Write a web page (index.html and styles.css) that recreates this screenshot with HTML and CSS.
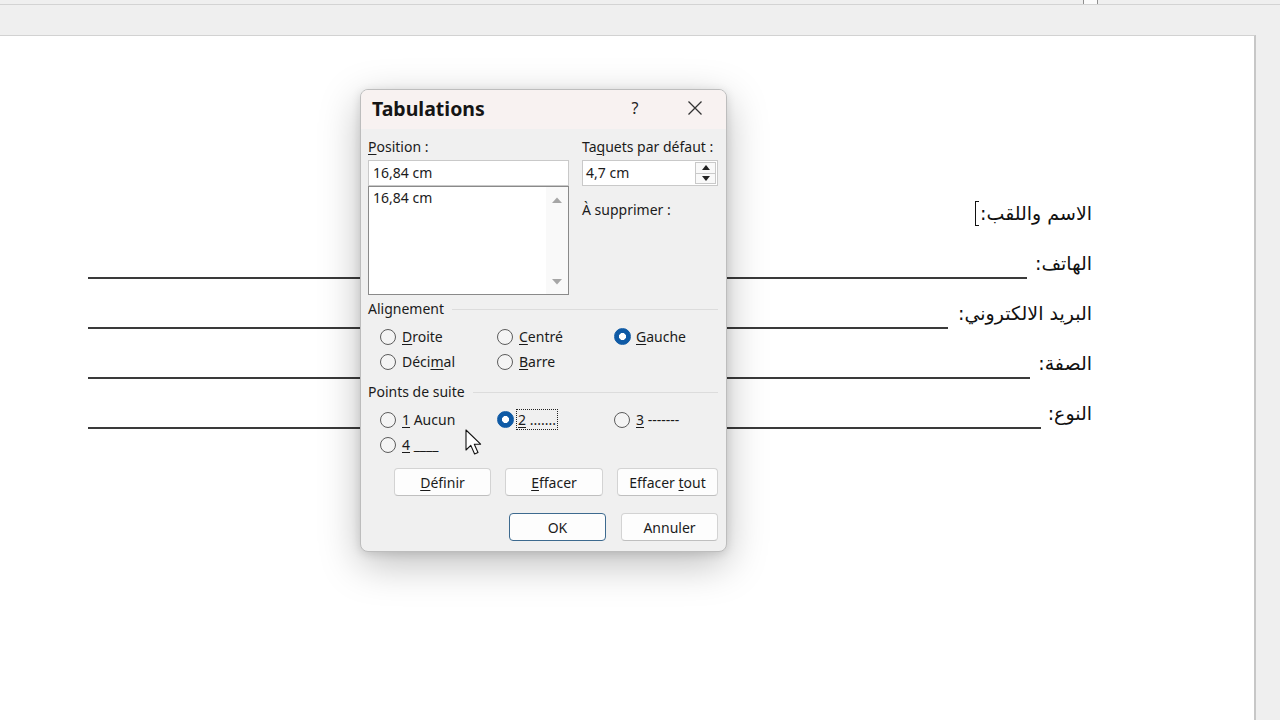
FILE: index.html
```html
<!DOCTYPE html>
<html lang="fr">
<head>
<meta charset="utf-8">
<title>Tabulations</title>
<link rel="stylesheet" href="styles.css">
</head>
<body>
<div class="app">
  <div class="topbar">
    <span class="marker"></span>
    <span class="rule"></span>
  </div>
  <div class="page">
    <div class="form" dir="rtl" lang="ar">
      <div class="frow"><span class="flabel">الاسم واللقب:</span><span class="caret"></span></div>
      <div class="frow"><span class="flabel">الهاتف:</span><span class="fline"></span></div>
      <div class="frow"><span class="flabel">البريد الالكتروني:</span><span class="fline long"></span></div>
      <div class="frow"><span class="flabel">الصفة:</span><span class="fline"></span></div>
      <div class="frow"><span class="flabel">النوع:</span><span class="fline short"></span></div>
    </div>
  </div>
</div>

<div class="dialog">
  <div class="titlebar">
    <span class="title">Tabulations</span>
    <span class="tbtn help">?</span>
    <span class="tbtn close">
      <svg width="16" height="16" viewBox="0 0 16 16"><path d="M1.5 1.5 L14.5 14.5 M14.5 1.5 L1.5 14.5" stroke="#333" stroke-width="1.3" fill="none"/></svg>
    </span>
  </div>
  <div class="dbody">
    <div class="top">
      <div class="colL">
        <div class="lbl"><u>P</u>osition :</div>
        <div class="input">16,84 cm</div>
        <div class="listbox">
          <div class="lb-items">16,84 cm</div>
          <div class="lb-scroll">
            <svg width="12" height="8" viewBox="0 0 12 8"><path d="M1 7 L6 1.5 L11 7 Z" fill="#a6a6a6"/></svg>
            <svg width="12" height="8" viewBox="0 0 12 8"><path d="M1 1 L6 6.5 L11 1 Z" fill="#a6a6a6"/></svg>
          </div>
        </div>
      </div>
      <div class="colR">
        <div class="lbl">Ta<u>q</u>uets par défaut :</div>
        <div class="input spin">
          <span class="spin-val">4,7 cm</span>
          <span class="spin-btns">
            <span class="sb"><svg width="8" height="5" viewBox="0 0 8 5"><path d="M0 5 L4 0 L8 5 Z" fill="#222"/></svg></span>
            <span class="sb"><svg width="8" height="5" viewBox="0 0 8 5"><path d="M0 0 L4 5 L8 0 Z" fill="#222"/></svg></span>
          </span>
        </div>
        <div class="lbl del">À supprimer :</div>
      </div>
    </div>

    <div class="group">Alignement<span class="gline"></span></div>
    <div class="radios">
      <div class="radio"><span class="dot"></span><span><u>D</u>roite</span></div>
      <div class="radio"><span class="dot"></span><span><u>C</u>entré</span></div>
      <div class="radio"><span class="dot on"></span><span><u>G</u>auche</span></div>
      <div class="radio"><span class="dot"></span><span>Déci<u>m</u>al</span></div>
      <div class="radio"><span class="dot"></span><span><u>B</u>arre</span></div>
    </div>

    <div class="group g2">Points de suite<span class="gline"></span></div>
    <div class="radios">
      <div class="radio"><span class="dot"></span><span><u>1</u> Aucun</span></div>
      <div class="radio"><span class="dot on"></span><span class="focus"><u>2</u> .......</span></div>
      <div class="radio"><span class="dot"></span><span><u>3</u> -------</span></div>
      <div class="radio"><span class="dot"></span><span><u>4</u> ____</span></div>
    </div>

    <div class="btnrow">
      <span class="btn w97"><span><u>D</u>éfinir</span></span>
      <span class="btn w98"><span><u>E</u>ffacer</span></span>
      <span class="btn w101"><span>Effacer <u>t</u>out</span></span>
    </div>
    <div class="btnrow ok-row">
      <span class="btn w97 default">OK</span>
      <span class="btn w97">Annuler</span>
    </div>
  </div>
</div>

<svg class="cursor" width="20" height="28" viewBox="0 0 20 28">
  <path d="M1 1 L1 21 L5.8 16.4 L9.6 25 L13 23.5 L9.3 15.2 L15.6 15.2 Z" fill="#fff" stroke="#111" stroke-width="1.1" stroke-linejoin="round"/>
</svg>
</body>
</html>
```

FILE: styles.css
```css
* { box-sizing: border-box; }
html, body { margin: 0; padding: 0; }
body {
  width: 1280px;
  height: 720px;
  overflow: hidden;
  background: #efefef;
  position: relative;
  font-family: "Noto Sans", "DejaVu Sans", sans-serif;
}
.app { display: flex; flex-direction: column; height: 720px; }

.topbar { height: 35px; display: flex; flex-direction: column; }
.marker {
  display: block;
  margin-left: 1083px;
  width: 15px;
  height: 5px;
  border: 1px solid #8f8f8f;
  border-top: none;
  background: #fbfbfb;
}
.rule { display: block; height: 1px; background: #d3d3d3; margin-top: -1px; }

.page {
  width: 1256px;
  flex: 1;
  background: #fff;
  border-top: 1px solid #d2d2d2;
  border-right: 2px solid #c7c7c7;
  padding: 152px 162px 0 88px;
}

.form { font-family: "DejaVu Sans", sans-serif; color: #111; }
.frow { display: flex; align-items: flex-start; height: 50px; }
.flabel { font-size: 19px; line-height: 50px; white-space: nowrap; }
.fline {
  flex: 1;
  margin-top: 39px;
  margin-right: 8px;
  border-top: 2px solid #3a3a3a;
}
.fline.long { margin-right: 10px; }
.fline.short { margin-right: 7px; }
.caret {
  margin-top: 13px;
  margin-right: 1px;
  width: 4px;
  height: 25px;
  border-left: 1.5px solid #111;
  border-top: 1px solid #111;
  border-bottom: 1px solid #111;
}

/* dialog */
.dialog {
  position: absolute;
  left: 360px;
  top: 89px;
  width: 367px;
  height: 463px;
  border: 1px solid #bdbdbd;
  border-radius: 8px;
  background: #f0f0f0;
  box-shadow: 0 12px 40px rgba(0,0,0,0.26), 0 2px 10px rgba(0,0,0,0.12);
  font-size: 14px;
  color: #1b1b1b;
  overflow: hidden;
  display: flex;
  flex-direction: column;
}
.titlebar {
  height: 39px;
  background: #f8f2f1;
  display: flex;
  align-items: center;
  padding: 0 11px 3px 11px;
}
.title { flex: 1; font-weight: 700; font-size: 19.5px; color: #151515; }
.tbtn { width: 40px; display: flex; justify-content: center; align-items: center; color: #222; }
.help { margin-right: 20px; font-size: 16px; }

.dbody { padding: 0 8px 0 7px; display: flex; flex-direction: column; }
.top { display: flex; gap: 13px; padding-top: 9px; }
.colL { width: 201px; display: flex; flex-direction: column; }
.colR { width: 136px; display: flex; flex-direction: column; }
.lbl { line-height: 18px; height: 18px; margin-bottom: 4px; white-space: nowrap; }
.lbl.del { margin-top: 15px; }
u { text-underline-offset: 2px; text-decoration-thickness: 1px; }

.input {
  height: 26px;
  background: #fff;
  border: 1px solid #c9c9c9;
  padding: 0 4px;
  line-height: 24px;
}
.listbox {
  height: 109px;
  background: #fff;
  border: 1px solid #8a8a8a;
  display: flex;
}
.lb-items { flex: 1; padding: 2px 4px; line-height: 18px; }
.lb-scroll {
  width: 22px;
  background: #f9f9f9;
  display: flex;
  flex-direction: column;
  justify-content: space-between;
  align-items: center;
  padding: 9px 0 8px;
}

.spin { display: flex; padding: 0 1px 0 3px; }
.spin-val { flex: 1; }
.spin-btns { display: flex; flex-direction: column; width: 21px; padding: 1px 0; }
.sb {
  flex: 1;
  display: flex;
  align-items: center;
  justify-content: center;
  border: 1px solid #c9c9c9;
  background: #f9f9f9;
}
.sb + .sb { border-top: none; }

.group { display: flex; align-items: center; line-height: 18px; margin-top: 5px; }
.g2 { margin-top: 9px; }
.gline { flex: 1; border-top: 1px solid #dcdcdc; margin-left: 8px; }

.radios {
  display: grid;
  grid-template-columns: 117px 117px 117px;
  grid-auto-rows: 25px;
  padding-left: 12px;
  margin-top: 6px;
}
.radio { display: flex; align-items: center; gap: 6px; white-space: nowrap; }
.dot {
  width: 16px;
  height: 16px;
  border: 1px solid #5c5c5c;
  border-radius: 50%;
  background: #f4f4f4;
  flex: none;
}
.dot.on {
  width: 17px;
  height: 17px;
  margin-left: -0.5px;
  margin-right: -0.5px;
  border-color: #0f5aa5;
  background: radial-gradient(circle, #fff 0 3.2px, #0f5aa5 3.8px);
}
.focus { outline: 1px dotted #222; outline-offset: 0; padding: 0 1px; margin-left: -2px; }

.btnrow { display: flex; justify-content: flex-end; gap: 14px; margin-top: 11px; }
.ok-row { margin-top: 17px; gap: 15px; }
.btn {
  height: 28px;
  display: flex;
  align-items: center;
  justify-content: center;
  background: #fdfdfd;
  border: 1px solid #d3d3d3;
  border-bottom-color: #bfbfbf;
  border-radius: 4px;
  white-space: nowrap;
}
.w97 { width: 97px; }
.w98 { width: 98px; }
.w101 { width: 101px; }
.btn.default { border: 1px solid #3d6a8f; }

.cursor { position: absolute; left: 465px; top: 429px; }
```
